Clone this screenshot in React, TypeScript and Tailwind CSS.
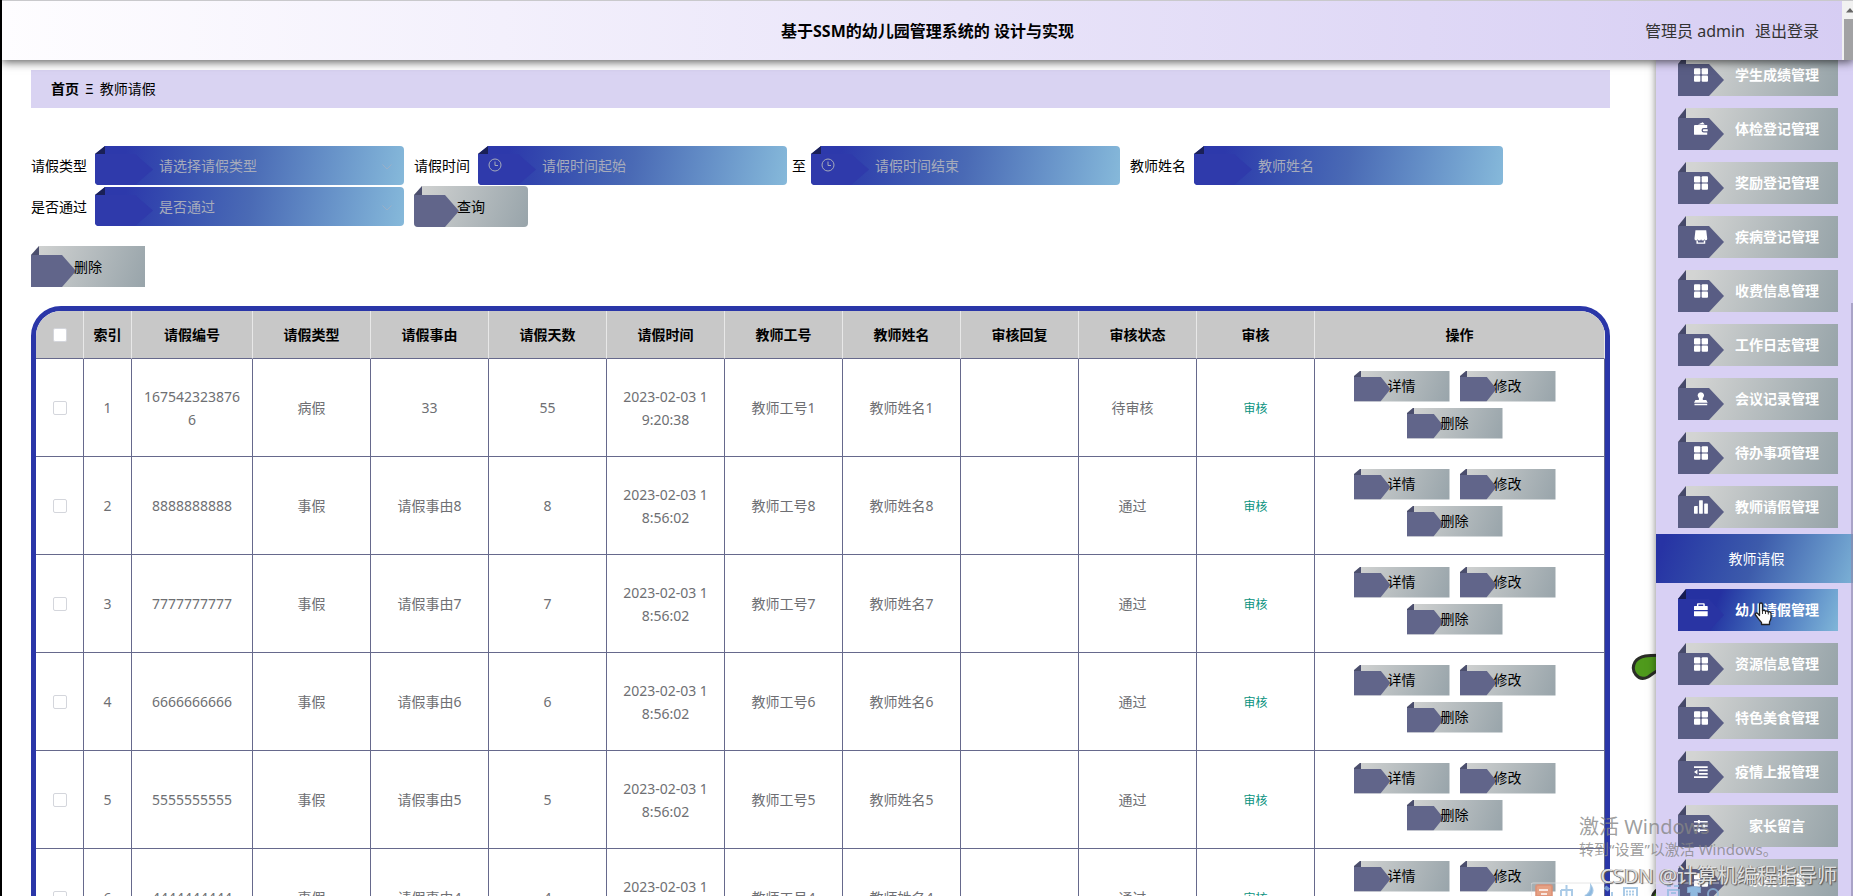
import React from 'react';
import clsx from 'clsx';

const records = [
  { id: 1, no: '1675423238766', type: '病假', reason: '33', days: '55', time: '2023-02-03 19:20:38', teacher: '1', status: '待审核' },
  { id: 2, no: '8888888888', type: '事假', reason: '请假事由8', days: '8', time: '2023-02-03 18:56:02', teacher: '8', status: '通过' },
  { id: 3, no: '7777777777', type: '事假', reason: '请假事由7', days: '7', time: '2023-02-03 18:56:02', teacher: '7', status: '通过' },
  { id: 4, no: '6666666666', type: '事假', reason: '请假事由6', days: '6', time: '2023-02-03 18:56:02', teacher: '6', status: '通过' },
  { id: 5, no: '5555555555', type: '事假', reason: '请假事由5', days: '5', time: '2023-02-03 18:56:02', teacher: '5', status: '通过' },
  { id: 6, no: '4444444444', type: '事假', reason: '请假事由4', days: '4', time: '2023-02-03 18:56:02', teacher: '4', status: '通过' },
];

const columns = ['请假编号', '请假类型', '请假事由', '请假天数', '请假时间', '教师工号', '教师姓名', '审核回复', '审核状态', '审核', '操作'];

const menu = [
  { label: '学生成绩管理', icon: 'grid' },
  { label: '体检登记管理', icon: 'wallet' },
  { label: '奖励登记管理', icon: 'grid' },
  { label: '疾病登记管理', icon: 'shop' },
  { label: '收费信息管理', icon: 'grid' },
  { label: '工作日志管理', icon: 'grid' },
  { label: '会议记录管理', icon: 'stamp' },
  { label: '待办事项管理', icon: 'grid' },
  { label: '教师请假管理', icon: 'chart', children: ['教师请假'] },
  { label: '幼儿请假管理', icon: 'case', active: true },
  { label: '资源信息管理', icon: 'grid' },
  { label: '特色美食管理', icon: 'grid' },
  { label: '疫情上报管理', icon: 'fold' },
  { label: '家长留言', icon: 'sliders' },
  { label: '系统管理', icon: 'grid' },
];

const icons: Record<string, React.ReactNode> = {
  grid: (
    <>
      <rect x="0" y="0" width="6.5" height="6.5" rx="1" />
      <rect x="7.8" y="0" width="6.5" height="6.5" rx="1" />
      <rect x="0" y="7.5" width="6.5" height="6.5" rx="1" />
      <rect x="7.8" y="7.5" width="6.5" height="6.5" rx="1" />
    </>
  ),
  wallet: (
    <>
      <path d="M4 2.5 9 0l2 2.5z" />
      <path d="M1 3h12.5v3H10a2.2 2.2 0 0 0 0 4.6h3.500V13H1a1 1 0 0 1-1-1V4a1 1 0 0 1 1-1z" />
      <path d="M10 7.300h4v2h-4a1 1 0 0 1 0-2z" />
    </>
  ),
  shop: (
    <>
      <path d="M1.500 0h11l1 8.500a1.500 1.500 0 0 1-3 .5 1.600 1.600 0 0 1-3.300 0 1.600 1.600 0 0 1-3.300 0A1.500 1.500 0 0 1 .5 8.500z" />
      <path d="M2.500 10.500H4v2h6v-2h1.500V14h-9z" />
    </>
  ),
  stamp: (
    <>
      <path d="M7 0a3.300 3.300 0 0 1 2.600 5.300c-.8 1-.9 1.900-.4 2.700h3.300L14 10.800H0L1.500 8h3.300c.5-.8.4-1.700-.4-2.700A3.300 3.300 0 0 1 7 0z" />
      <path d="M.5 11.800h13v1.700H.5z" />
    </>
  ),
  chart: (
    <>
      <rect x="0" y="6" width="3.800" height="8" rx=".5" />
      <rect x="5.200" y="0" width="3.800" height="14" rx=".5" />
      <rect x="10.400" y="3.500" width="3.800" height="10.500" rx=".5" />
    </>
  ),
  case: (
    <>
      <path d="M4 0h6a1 1 0 0 1 1 1v2h2.500a.5.5 0 0 1 .5.5V7H0V3.500A.5.5 0 0 1 .5 3H3V1a1 1 0 0 1 1-1zm.5 1.500V3h5V1.500z" fillRule="evenodd" />
      <path d="M0 8.200h14V13a.5.5 0 0 1-.5.5H.5A.5.5 0 0 1 0 13z" />
    </>
  ),
  fold: <path d="M0 1h14v1.800H0zM5 4.500h9v1.800H5zM5 8h9v1.800H5zM0 11.300h14v1.800H0zM3.500 4.500v5L0 7z" />,
  sliders: (
    <path d="M0 2h4V.8h2V2h8v1.500H6v1.200H4V3.500H0zM0 6.300h9V5.100h2v1.200h3v1.500h-3V9H9V7.800H0zM0 10.700h4V9.500h2v1.200h8v1.500H6v1.200H4v-1.200H0z" />
  ),
};

const MenuIcon = ({ name }: { name: string }) => (
  <svg viewBox="0 0 14.300 14" className="w-3.5 h-3.5 shrink-0 relative" fill="#fff">
    {icons[name]}
  </svg>
);

/* Grey ribbon button with the folded corner */
const RibbonButton = ({ children, rounded, small }: { children: React.ReactNode; rounded?: boolean; small?: boolean }) => (
  <button
    className={clsx(
      'relative overflow-hidden text-sm text-black bg-linear-110 from-[#d3d4d3] to-[#98a4aa]',
      small
        ? 'w-24 h-[31px] [clip-path:polygon(7px_0,100%_0,100%_100%,0_100%,0_6px)]'
        : 'w-[114px] h-[41px] [clip-path:polygon(8px_0,100%_0,100%_100%,0_100%,0_9px)]',
      rounded && 'rounded',
    )}
  >
    <span className={clsx('absolute left-0 top-0 bg-[#4b4e6d]', small ? 'w-[7px] h-1.5' : 'w-2 h-[9px]')} />
    <span
      className={clsx(
        'absolute left-0 bottom-0 bg-[#61658a]',
        small
          ? 'w-[37px] h-[25px] [clip-path:polygon(0_0,27px_0,100%_50%,27px_100%,0_100%)]'
          : 'w-[45px] h-8 [clip-path:polygon(0_0,31px_0,100%_50%,31px_100%,0_100%)]',
      )}
    />
    <span className="relative">{children}</span>
  </button>
);

const fieldClass =
  'block w-full h-full appearance-none bg-transparent pl-16 pr-8 text-sm text-[#a6abbb] placeholder:text-[#a6abbb] outline-none';

const FieldBox = ({ children, icon }: { children: React.ReactNode; icon?: 'clock' | 'arrow' }) => (
  <div className="relative w-[309px] h-[39px] rounded overflow-hidden bg-linear-100 from-[#2d39ab] from-10% via-[#4a6ab5] via-50% to-[#86b9da] [clip-path:polygon(10px_0,100%_0,100%_100%,0_100%,0_8px)]">
    <span className="absolute left-0 top-0 w-2.5 h-2 bg-[#1a2057]" />
    <span className="absolute left-0 bottom-0 w-[58px] h-[31px] bg-[#2f3aab] [clip-path:polygon(0_0,40px_0,100%_50%,40px_100%,0_100%)]" />
    {icon === 'clock' && (
      <svg viewBox="0 0 14 14" className="absolute left-2.5 top-3 w-3.5 h-3.5" fill="none" stroke="#a6abbb">
        <circle cx="7" cy="7" r="6" />
        <path d="M7 3.500V7.500h3" />
      </svg>
    )}
    {icon === 'arrow' && (
      <svg viewBox="0 0 10 6" className="absolute right-3 top-[18px] w-2.5 h-1.5" fill="none" stroke="#9ab0c8">
        <path d="M.5.5 5 5 9.500.5" />
      </svg>
    )}
    <div className="relative h-full">{children}</div>
  </div>
);

const Header = () => (
  <header className="relative z-20 h-15 shrink-0 border-t border-[#c9c9cc] bg-linear-to-r from-[#fefdff] to-[#d6cdf3] shadow-[0_2px_9px_rgba(0,0,0,0.65)] grid grid-cols-[1fr_auto_1fr] items-center text-base">
    <h1 className="col-start-2 font-bold text-black">基于SSM的幼儿园管理系统的 设计与实现</h1>
    <div className="flex justify-end gap-2.5 pr-[34px] text-[#333]">
      <span>管理员 admin</span>
      <a href="#logout">退出登录</a>
    </div>
    <div className="absolute right-0 top-0 w-[11px] h-full bg-[#f1f1f1] overflow-hidden">
      <svg viewBox="0 0 8 5" className="w-2 h-[5px] mt-[7px] ml-1" fill="#666">
        <path d="M0 4.500 4 0l4 4.500z" />
      </svg>
      <div className="mt-1.5 ml-0.5 h-full bg-[#a2a2a4]" />
    </div>
  </header>
);

const Filters = () => (
  <form className="mt-[37px] flex flex-wrap items-center gap-x-2.5 text-sm text-black" onSubmit={(e) => e.preventDefault()}>
    <div className="flex items-center gap-2 h-[41px]">
      <label htmlFor="type">请假类型</label>
      <FieldBox icon="arrow">
        <select id="type" className={fieldClass}>
          <option>请选择请假类型</option>
        </select>
      </FieldBox>
    </div>
    <div className="flex items-center h-[41px]">
      <label htmlFor="start" className="mr-2">请假时间</label>
      <FieldBox icon="clock">
        <input id="start" className={fieldClass} placeholder="请假时间起始" />
      </FieldBox>
      <label htmlFor="end" className="mx-[5px]">至</label>
      <FieldBox icon="clock">
        <input id="end" className={fieldClass} placeholder="请假时间结束" />
      </FieldBox>
    </div>
    <div className="flex items-center gap-2 h-[41px]">
      <label htmlFor="name">教师姓名</label>
      <FieldBox>
        <input id="name" className={fieldClass} placeholder="教师姓名" />
      </FieldBox>
    </div>
    <div className="flex items-center gap-2 h-[41px]">
      <label htmlFor="passed">是否通过</label>
      <FieldBox icon="arrow">
        <select id="passed" className={fieldClass}>
          <option>是否通过</option>
        </select>
      </FieldBox>
    </div>
    <RibbonButton rounded>查询</RibbonButton>
  </form>
);

const checkboxClass = 'block mx-auto w-3.5 h-3.5 appearance-none rounded-xs border border-[#d4d6dc] bg-white';
const cell = 'border-r border-b border-[#66698c] px-2.5 break-all';

const LeaveTable = () => (
  <div className="mt-[19px] rounded-t-[30px] border-[5px] border-[#2a36a8] overflow-hidden">
    <table className="w-full table-fixed border-separate border-spacing-0 text-sm leading-[23px] text-[#6e6f73] text-center">
      <colgroup>
        <col className="w-12" />
        <col className="w-12" />
        <col className="w-[121px]" />
        {columns.slice(2).map((c) => (
          <col key={c} className="w-[118px]" />
        ))}
        <col />
      </colgroup>
      <thead>
        <tr className="h-12 bg-[#c8c8c8] text-black">
          <th className="border-r border-[#e8e8e8] border-b border-b-[#66698c]">
            <input type="checkbox" aria-label="全选" className={checkboxClass} />
          </th>
          <th className="border-r border-[#e8e8e8] border-b border-b-[#66698c]">索引</th>
          {columns.map((c) => (
            <th key={c} className="border-r border-[#e8e8e8] border-b border-b-[#66698c]">{c}</th>
          ))}
        </tr>
      </thead>
      <tbody>
        {records.map((r) => (
          <tr key={r.id} className="h-[98px]">
            <td className={cell}>
              <input type="checkbox" aria-label={`选择第${r.id}行`} className={checkboxClass} />
            </td>
            <td className={cell}>{r.id}</td>
            <td className={cell}>{r.no}</td>
            <td className={cell}>{r.type}</td>
            <td className={cell}>{r.reason}</td>
            <td className={cell}>{r.days}</td>
            <td className="border-r border-b border-[#66698c] px-3.5 break-all">{r.time}</td>
            <td className={cell}>教师工号{r.teacher}</td>
            <td className={cell}>教师姓名{r.teacher}</td>
            <td className={cell}></td>
            <td className={cell}>
              <span className="mr-2.5">{r.status}</span>
            </td>
            <td className={cell}>
              <button className="text-xs text-[#0a9280]">审核</button>
            </td>
            <td className={cell}>
              <div className="w-[222px] mx-auto flex flex-wrap justify-center gap-x-2.5 gap-y-1.5 pr-2.5 pb-1.5">
                <RibbonButton small>详情</RibbonButton>
                <RibbonButton small>修改</RibbonButton>
                <RibbonButton small>删除</RibbonButton>
              </div>
            </td>
          </tr>
        ))}
      </tbody>
    </table>
  </div>
);

const Sidebar = () => (
  <aside className="relative z-10 w-[197px] shrink-0 bg-[#d8d0f4] shadow-[0_0_8px_rgba(0,0,0,0.5)]">
    <ul className="-mt-3 text-sm text-white">
      {menu.map((item) => (
        <li key={item.label}>
          <div className="py-1.5 pl-[22px] pr-[15px]">
            <a
              href="#menu"
              className={clsx(
                'relative flex items-center h-[42px] pl-4 gap-2 font-bold bg-linear-110 [clip-path:polygon(8px_0,100%_0,100%_100%,0_100%,0_10px)]',
                item.active ? 'from-[#2531a1] from-25% to-[#80b6d8]' : 'from-[#d3d4d3] from-10% to-[#96a3a8]',
              )}
            >
              <span className={clsx('absolute left-0 top-0 w-2 h-2.5', item.active ? 'bg-[#171c50]' : 'bg-[#46496a]')} />
              <span
                className={clsx(
                  'absolute left-0 bottom-0 w-[46px] h-8 [clip-path:polygon(0_0,31px_0,100%_50%,31px_100%,0_100%)]',
                  item.active ? 'bg-[#2934a3]' : 'bg-[#595d84]',
                )}
              />
              <MenuIcon name={item.icon} />
              <span className="flex-1 text-center">{item.label}</span>
            </a>
          </div>
          {item.children?.map((child) => (
            <a
              key={child}
              href="#sub"
              className="flex items-center justify-center h-[49px] pl-1 bg-linear-110 from-[#2733a4] from-5% via-[#3d5bab] via-50% to-[#7bb0d5]"
            >
              {child}
            </a>
          ))}
        </li>
      ))}
    </ul>
    {/* thin scrollbar thumb */}
    <div className="absolute right-0 top-[243px] bottom-0 w-0.5 bg-[#8a86a8]/60" />
  </aside>
);

const Overlays = () => (
  <>
    <svg viewBox="0 0 19 24" className="absolute z-30 right-[80px] top-[602px] w-[19px] h-6" fill="#fff" stroke="#222" strokeWidth="1.300" strokeLinejoin="round">
      <path d="M5.500 13.500V2.500a1.500 1.500 0 0 1 3 0V9c.5-1 2.800-.8 3 .5.7-.9 2.600-.6 2.800.7.800-.8 2.700-.4 2.700 1.200v4c0 2-.8 3.200-1.500 4.500V22.500H7.500v-2C5.500 18.500 3.500 15.500 1.500 13c-1-1.500 1-2.600 2.200-1.500z" />
      <path d="M8.500 9v3M11.500 9.500V12M14.300 10.200V12.500" strokeWidth=".9" />
    </svg>
    <div className="absolute z-30 right-20 bottom-[37px] w-[194px] text-[#858585]/80 whitespace-nowrap">
      <p className="text-xl leading-6">激活 Windows</p>
      <p className="text-[15px] leading-5">转到“设置”以激活 Windows。</p>
    </div>
    <div className="absolute z-30 right-4 bottom-1.5 text-xl leading-7 text-[#eee]/90 whitespace-nowrap [text-shadow:1px_1px_1px_#555,-1px_0_0_#888]">
      CSDN @计算机编程指导师
    </div>
    <svg viewBox="0 0 190 14" className="absolute z-20 right-[132px] bottom-0 w-[190px] h-3.5" fill="none" stroke="#8fb9df" strokeOpacity=".75" strokeWidth="2">
      <path d="M0 14V3a2 2 0 0 1 2-2h186" stroke="#ddd" strokeWidth="1" />
      <path d="M5 14V5a2 2 0 0 1 2-2h12a2 2 0 0 1 2 2v9z" fill="#e5a184" stroke="#dc8f74" />
      <path d="M8 8h9M10 12h6" stroke="#fff" />
      <path d="M30 8h11v6M30 14V8M35.500 3v11" />
      <path d="M60 4c0 5-2 8-6 10h5c3-3 3-7 1-10z" fill="#8fb9df" />
      <path d="M74 5l4 3M80 12h2" strokeWidth="4" />
      <rect x="93" y="6" width="13" height="9" />
      <path d="M95 9.500h9M95 12.500h9" strokeDasharray="2 1" />
      <path d="M136 4h4M143 4h5M136 8h12v6M137 8v6M140 11h5" />
      <path d="M157 6l4-1h4l4 1v4h-3v4h-6v-4h-3z" fill="#8fb9df" />
      <circle cx="182" cy="12" r="5" />
    </svg>
  </>
);

const App = () => {
  return (
    <div className="relative h-screen flex flex-col overflow-hidden border-l-2 border-black bg-white font-['Noto_Sans','Noto_Sans_CJK_SC',sans-serif]">
      <Header />
      <div className="relative flex-1 min-h-0 flex">
        <main className="flex-1 min-w-0 pt-2.5 pl-[29px] pr-[46px]">
          <nav className="flex items-center gap-1.5 h-[38px] px-5 bg-[#d9d3f2] text-sm text-black">
            <a href="#home" className="font-bold">首页</a>
            <span>Ξ</span>
            <span>教师请假</span>
          </nav>
          <Filters />
          <div className="mt-[19px] flex">
            <RibbonButton>删除</RibbonButton>
          </div>
          <LeaveTable />
        </main>
        {/* leaves peeking out behind the menu */}
        <svg viewBox="0 0 40 250" className="absolute right-[184px] top-[590px] w-10 h-[250px]" fill="#4f9a1c" stroke="#2b2d27" strokeWidth="3">
          <path d="M40 5C28 6 12 3 6 12c-5 9 3 20 13 15 5-3 8-8 21-10z" />
          <circle cx="36" cy="250" r="13" />
        </svg>
        <Sidebar />
      </div>
      <Overlays />
    </div>
  );
};

export default App;
